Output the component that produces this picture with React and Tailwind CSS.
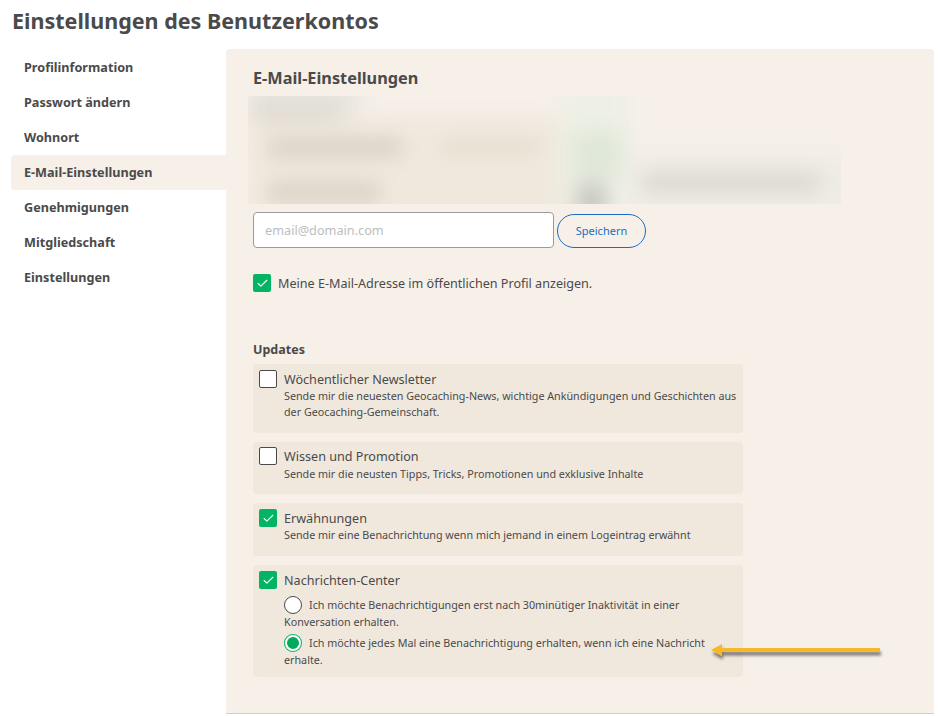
import { Check } from "lucide-react";

const navItems = [
  "Profilinformation",
  "Passwort ändern",
  "Wohnort",
  "E-Mail-Einstellungen",
  "Genehmigungen",
  "Mitgliedschaft",
  "Einstellungen",
];

function Checkbox({ checked }) {
  if (checked) {
    return (
      <span className="flex h-[18px] w-[18px] shrink-0 items-center justify-center rounded-[2px] bg-[#02b463]">
        <Check size={13} strokeWidth={2} className="text-white" />
      </span>
    );
  }
  return <span className="block h-[18px] w-[18px] shrink-0 rounded-[2px] border border-[#4a4a4a] bg-white" />;
}

function Radio({ checked }) {
  if (checked) {
    return (
      <span className="mr-[7px] inline-block h-[18px] w-[18px] rounded-full bg-[#02a85c] align-[-5px] shadow-[inset_0_0_0_1px_#02b463,inset_0_0_0_3px_#ffffff]" />
    );
  }
  return <span className="mr-[7px] inline-block h-[18px] w-[18px] rounded-full border border-[#4a4a4a] bg-white align-[-5px]" />;
}

function UpdateCard({ title, checked, lift, className, children }) {
  return (
    <div className={`rounded bg-[#f0e8dd] pl-[6px] pt-[6px] ${className}`}>
      <div className={lift ? "-mt-px mb-px flex gap-[7px]" : "flex gap-[7px]"}>
        <Checkbox checked={checked} />
        <div className="pt-px text-[12.6px] leading-[17px]">{title}</div>
      </div>
      {children}
    </div>
  );
}

function Desc({ children }) {
  return <p className="ml-[25px] text-[10.74px] leading-[16px]">{children}</p>;
}

export default function App() {
  return (
    <div className="relative h-[716px] w-[938px] overflow-hidden bg-white font-['Noto_Sans',sans-serif] text-[#4a4a4a]">
      <h1 className="pl-3 pt-[6px] text-[21.5px] font-bold leading-[30px]">Einstellungen des Benutzerkontos</h1>

      <div className="mt-[13px] flex pl-[11px]">
        <nav className="w-[215px] pt-px">
          {navItems.map((item) => (
            <div
              key={item}
              className={`h-[35px] pl-[13px] text-[12.65px] font-bold leading-[35px] ${
                item === "E-Mail-Einstellungen" ? "rounded-l bg-[#f6f0e9]" : ""
              }`}
            >
              {item}
            </div>
          ))}
        </nav>

        <main className="h-[665px] w-[708px] rounded-t border-b border-[#cfcfcf] bg-[#f6f0e9] pl-[27px]">
          <h2 className="pt-[17px] text-[16.3px] font-bold leading-[24px]">E-Mail-Einstellungen</h2>

          {/* unkenntlich gemachter Bereich */}
          <div className="-ml-[5px] mt-[6px] h-[108px] w-[593px] overflow-hidden">
            <div className="-ml-[20px] -mt-[20px] flex h-[148px] w-[633px] blur-[10px]">
              <div className="w-[332px] pl-[20px]">
                <div className="h-[54px] w-[110px] bg-[#e8e4de] pl-[4px] pt-[34px]">
                  <div className="h-[13px] w-[86px] bg-[#cdc9c3]" />
                </div>
                <div className="-mt-[13px] h-[107px] bg-[#f0e8dd]">
                  <div className="flex pl-[20px] pt-[23px]">
                    <div className="h-[15px] w-[134px] bg-[#d4ccc2]" />
                    <div className="ml-[39px] h-[13px] w-[99px] bg-[#e4dccd]" />
                  </div>
                  <div className="ml-[20px] mt-[28px] h-[18px] w-[112px] bg-[#d8d0c5]" />
                </div>
              </div>
              <div className="w-[70px] bg-[#eef0e6] pl-[12px] pt-[54px]">
                <div className="h-[47px] w-[51px] bg-[#e0e8d9]" />
                <div className="ml-[4px] mt-[6px] h-[41px] w-[31px] bg-[#c9c9c2]" />
              </div>
              <div className="w-[231px] pt-[81px]">
                <div className="h-[67px] bg-[#efece5] pl-[12px] pt-[15px]">
                  <div className="h-[20px] w-[178px] bg-[#dcd8d1]" />
                </div>
              </div>
            </div>
          </div>

          <div className="mt-2 flex items-center gap-[3px]">
            <div className="flex h-[36px] w-[301px] items-center rounded border border-[#9b9b9b] bg-white pl-[11px] pt-px text-[12.7px] text-[#bdbdbd]">
              email@domain.com
            </div>
            <button className="mt-[2px] h-[34px] w-[89px] rounded-full border border-[#1b6dc1] text-[11px] text-[#1b6dc1]">
              Speichern
            </button>
          </div>

          <div className="mt-[26px] flex h-[18px] items-center gap-[7px] text-[12.6px] leading-[17px]">
            <Checkbox checked />
            <span className="pt-px">Meine E-Mail-Adresse im öffentlichen Profil anzeigen.</span>
          </div>

          <h3 className="mt-[49px] text-[12.5px] font-bold leading-[18px]">Updates</h3>

          <div className="mt-[5px] flex w-[490px] flex-col gap-[9px]">
            <UpdateCard title="Wöchentlicher Newsletter" className="h-[69px]">
              <Desc>
                Sende mir die neuesten Geocaching-News, wichtige Ankündigungen und Geschichten aus der
                Geocaching-Gemeinschaft.
              </Desc>
            </UpdateCard>
            <UpdateCard title="Wissen und Promotion" lift className="h-[52px]">
              <Desc>Sende mir die neusten Tipps, Tricks, Promotionen und exklusive Inhalte</Desc>
            </UpdateCard>
            <UpdateCard title="Erwähnungen" checked className="h-[53px]">
              <Desc>Sende mir eine Benachrichtung wenn mich jemand in einem Logeintrag erwähnt</Desc>
            </UpdateCard>
            <UpdateCard title="Nachrichten-Center" checked className="h-[112px]">
              <div className="ml-[25px] mt-[7px] w-[430px] text-[10.74px] leading-[17px]">
                <p>
                  <Radio />
                  Ich möchte Benachrichtigungen erst nach 30minütiger Inaktivität in einer Konversation erhalten.
                </p>
                <p className="mt-[3px]">
                  <Radio checked />
                  Ich möchte jedes Mal eine Benachrichtigung erhalten, wenn ich eine Nachricht erhalte.
                </p>
              </div>
            </UpdateCard>
          </div>
        </main>
      </div>

      {/* Pfeil liegt über dem Inhalt */}
      <svg className="absolute left-[705px] top-[640px]" width="185" height="26" viewBox="0 0 185 26">
        <defs>
          <filter id="arrowShadow" x="-10%" y="-80%" width="120%" height="300%">
            <feDropShadow dx="1" dy="3.5" stdDeviation="1.5" floodColor="#000" floodOpacity="0.5" />
          </filter>
        </defs>
        <path d="M175 8H17V4L6 10l11 6V12H175z" fill="#f6b829" filter="url(#arrowShadow)" />
      </svg>
    </div>
  );
}
